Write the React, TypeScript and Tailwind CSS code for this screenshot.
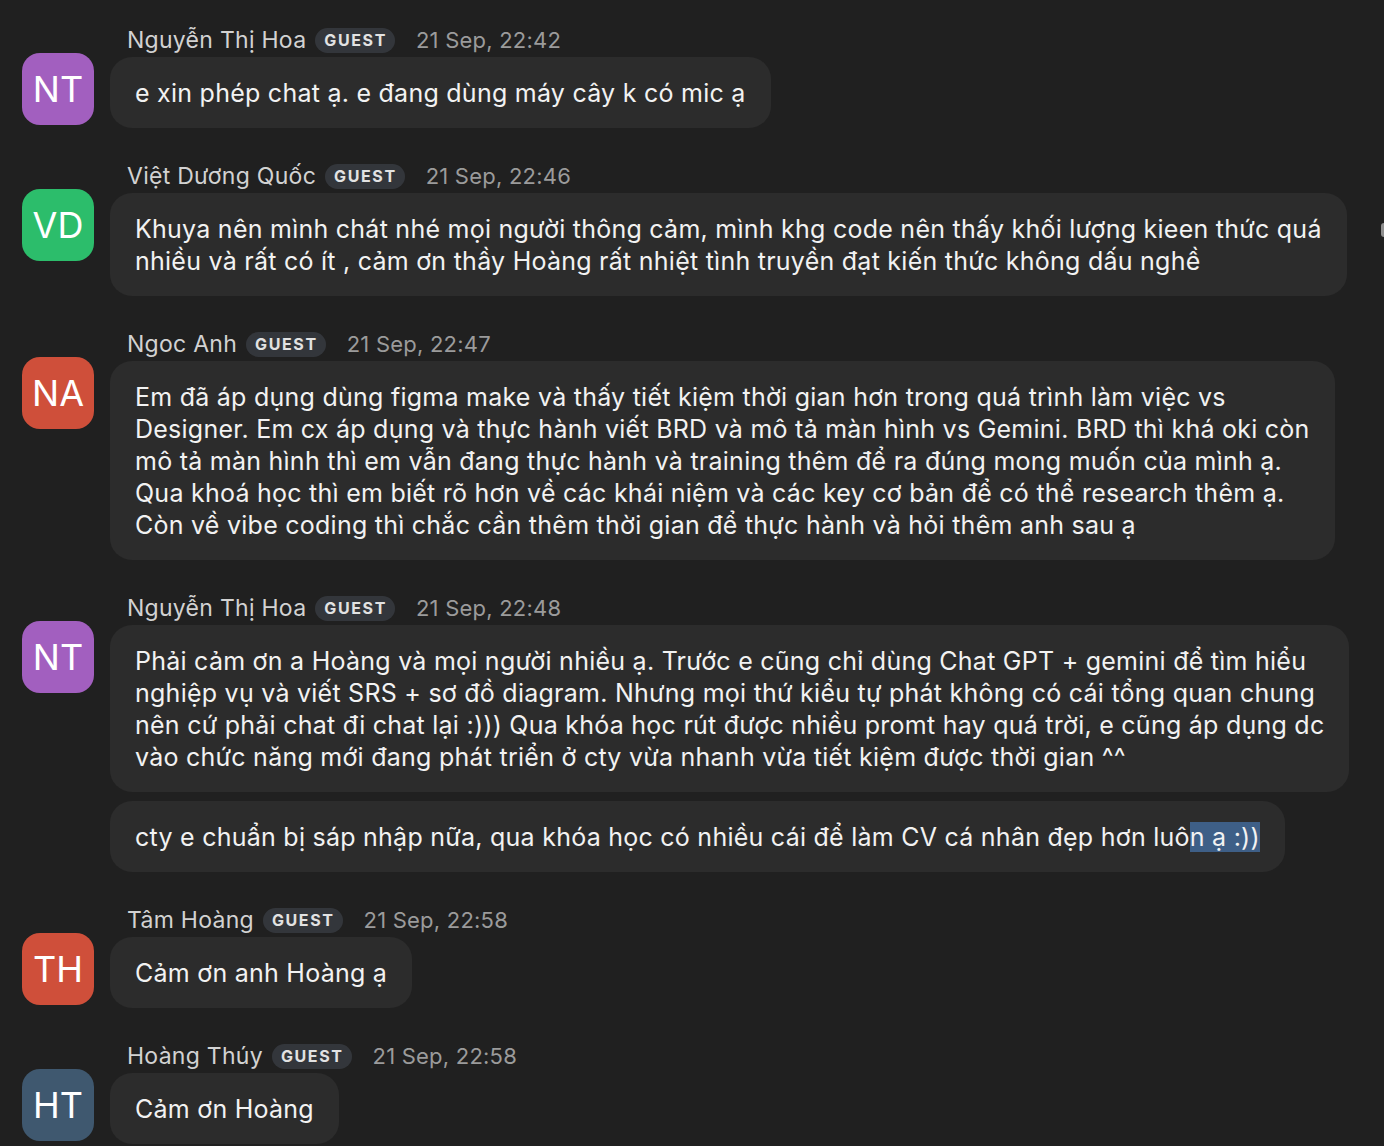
import type { ReactNode } from 'react'

// ── Data ──────────────────────────────────────

type Group = {
  initials: string
  avatar: string
  name: string
  time: string
  bubbles: ReactNode[][]
  edge?: boolean
}

const groups: Group[] = [
  {
    initials: 'NT',
    avatar: 'bg-[#a25fbf]',
    name: 'Nguyễn Thị Hoa',
    time: '21 Sep, 22:42',
    bubbles: [['e xin phép chat ạ. e đang dùng máy cây k có mic ạ']],
  },
  {
    initials: 'VD',
    avatar: 'bg-[#2cbd6b]',
    name: 'Việt Dương Quốc',
    time: '21 Sep, 22:46',
    edge: true,
    bubbles: [
      [
        'Khuya nên mình chát nhé mọi người thông cảm, mình khg code nên thấy khối lượng kieen thức quá',
        'nhiều và rất có ít , cảm ơn thầy Hoàng rất nhiệt tình truyền đạt kiến thức không dấu nghề',
      ],
    ],
  },
  {
    initials: 'NA',
    avatar: 'bg-[#cf4f3a]',
    name: 'Ngoc Anh',
    time: '21 Sep, 22:47',
    bubbles: [
      [
        'Em đã áp dụng dùng figma make và thấy tiết kiệm thời gian hơn trong quá trình làm việc vs',
        'Designer. Em cx áp dụng và thực hành viết BRD và mô tả màn hình vs Gemini. BRD thì khá oki còn',
        'mô tả màn hình thì em vẫn đang thực hành và training thêm để ra đúng mong muốn của mình ạ.',
        'Qua khoá học thì em biết rõ hơn về các khái niệm và các key cơ bản để có thể research thêm ạ.',
        'Còn về vibe coding thì chắc cần thêm thời gian để thực hành và hỏi thêm anh sau ạ',
      ],
    ],
  },
  {
    initials: 'NT',
    avatar: 'bg-[#a25fbf]',
    name: 'Nguyễn Thị Hoa',
    time: '21 Sep, 22:48',
    bubbles: [
      [
        'Phải cảm ơn a Hoàng và mọi người nhiều ạ. Trước e cũng chỉ dùng Chat GPT + gemini để tìm hiểu',
        'nghiệp vụ và viết SRS + sơ đồ diagram. Nhưng mọi thứ kiểu tự phát không có cái tổng quan chung',
        'nên cứ phải chat đi chat lại :))) Qua khóa học rút được nhiều promt hay quá trời, e cũng áp dụng dc',
        'vào chức năng mới đang phát triển ở cty vừa nhanh vừa tiết kiệm được thời gian ^^',
      ],
      [
        <>
          cty e chuẩn bị sáp nhập nữa, qua khóa học có nhiều cái để làm CV cá nhân đẹp hơn luô
          <span className="bg-[#3e5f87]">n ạ :))</span>
        </>,
      ],
    ],
  },
  {
    initials: 'TH',
    avatar: 'bg-[#cf4f3a]',
    name: 'Tâm Hoàng',
    time: '21 Sep, 22:58',
    bubbles: [['Cảm ơn anh Hoàng ạ']],
  },
  {
    initials: 'HT',
    avatar: 'bg-[#3f586f]',
    name: 'Hoàng Thúy',
    time: '21 Sep, 22:58',
    bubbles: [['Cảm ơn Hoàng']],
  },
]

// ── Pieces ────────────────────────────────────

function Header({ name, time }: { name: string; time: string }): ReactNode {
  return (
    <div className="flex items-center h-7 pl-[17px]">
      <span className="text-[23px] tracking-[0.012em] text-[#d2d2d2]">{name}</span>
      <span className="ml-[9px] rounded-full bg-[#33363b] pl-[9px] pr-[8px] h-[25px] flex items-center text-[16px] font-bold tracking-[0.1em] text-[#e2e2e2]">
        GUEST
      </span>
      <span className="ml-[21px] text-[22px] tracking-[0.01em] text-[#9b9b9b]">{time}</span>
    </div>
  )
}

function Bubble({ lines }: { lines: ReactNode[] }): ReactNode {
  return (
    <div className="w-fit rounded-[22px] bg-[#2c2c2c] px-[25px] py-[19.5px] text-[25px] tracking-[0.01em] leading-8 text-[#f2f2f2]">
      {lines.map((line, i) => (
        <div key={i} className="whitespace-nowrap">
          {line}
        </div>
      ))}
    </div>
  )
}

function MessageGroup({ group }: { group: Group }): ReactNode {
  return (
    <div className="relative grid grid-cols-[72px_1fr] gap-x-4">
      <div />
      <Header name={group.name} time={group.time} />
      <div
        className={`${group.avatar} mt-[-1px] flex h-[72px] w-[72px] items-center justify-center self-start rounded-[18px] text-[36px] text-white`}
      >
        {group.initials}
      </div>
      <div className="mt-[3px] flex flex-col gap-[9px]">
        {group.bubbles.map((lines, i) => (
          <Bubble key={i} lines={lines} />
        ))}
      </div>
      {group.edge && (
        <span className="absolute right-0 top-[61px] h-[14px] w-[3px] rounded-l-full bg-[#8e8e8e]" />
      )}
    </div>
  )
}

// ── Main export ───────────────────────────────

export default function App(): ReactNode {
  return (
    <div
      className="min-h-[1146px] w-[1384px] overflow-hidden bg-[#202020] pl-[22px] pt-[26px]"
      style={{ fontFamily: 'Inter, "Noto Sans", sans-serif' }}
    >
      <div className="flex flex-col gap-[34px]">
        {groups.map((g, i) => (
          <MessageGroup key={i} group={g} />
        ))}
      </div>
    </div>
  )
}
